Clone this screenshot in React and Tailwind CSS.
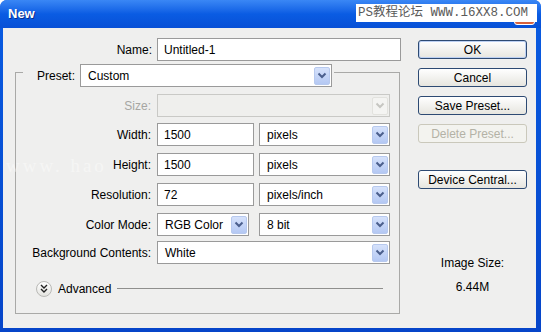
import React from "react";

const font = { fontFamily: "'Liberation Sans', Arial, sans-serif" };

// little blue drop button used on every select
const Arrow = ({ disabled }) => (
  <div
    className={
      "w-[16px] h-[18px] mr-[1px] flex items-center justify-center rounded-[2px] " +
      (disabled
        ? "bg-[#f4f4f2] border border-[#e2e2de]"
        : "bg-gradient-to-b from-[#d6e2fb] to-[#b4c8f3] border border-[#b7c9ee]")
    }
  >
    <svg width="10" height="7" viewBox="0 0 10 7">
      <path
        d="M1.5 1.5 L5 5 L8.5 1.5"
        fill="none"
        stroke={disabled ? "#c6c6c2" : "#4b5f8d"}
        strokeWidth="2"
      />
    </svg>
  </div>
);

const Select = ({ value, width, disabled }) => (
  <div
    className={
      "h-[23px] flex items-center justify-between border " +
      (disabled ? "bg-[#efefed] border-[#c9c9c6]" : "bg-white border-[#9a9a9a]")
    }
    style={{ width }}
  >
    <span className="pl-[7px] text-[12px] text-black">{value}</span>
    <Arrow disabled={disabled} />
  </div>
);

const Input = ({ value, width }) => (
  <div
    className="h-[23px] flex items-center bg-white border border-[#9a9a9a] pl-[6px] text-[12px] text-black"
    style={{ width }}
  >
    {value}
  </div>
);

const Row = ({ label, className = "", muted, children }) => (
  <div className={"flex items-center " + className}>
    <div
      className={
        "w-[136px] text-right text-[12px] pr-[1px] " +
        (muted ? "text-[#a6a6a2]" : "text-black")
      }
    >
      {label}
    </div>
    <div className="ml-[5px] flex items-center gap-[5px]">{children}</div>
  </div>
);

const Btn = ({ children, className = "", disabled, primary }) => (
  <div
    className={
      "w-[109px] h-[19px] flex items-center justify-center rounded-[3px] border text-[12px] " +
      (disabled
        ? "border-[#cac8bb] bg-[#f3f3ef] text-[#b4b2a6] "
        : "border-[#2d4a73] bg-gradient-to-b from-white to-[#e6e5df] text-black ") +
      (primary ? "shadow-[inset_0_0_0_1px_#bcd0f2] " : "") +
      className
    }
  >
    {children}
  </div>
);

export default function App() {
  return (
    <div
      className="relative w-[541px] h-[332px] flex flex-col bg-gradient-to-b from-[#0a5ce2] to-[#0645c9] rounded-t-[7px] overflow-hidden"
      style={font}
    >
      {/* title bar */}
      <div className="h-[28px] flex items-center justify-between pl-[8px] pr-[6px] bg-gradient-to-b from-[#3a87f5] via-[#0a5ce3] to-[#0850d6]">
        <span className="text-white font-bold text-[13px] [text-shadow:1px_1px_0_#0a2f8a]">
          New
        </span>
        <div className="w-[21px] h-[21px] rounded-[3px] bg-[#d8613c] border border-white" />
      </div>

      {/* body */}
      <div className="flex-1 ml-[3px] mr-[5px] mb-[4px] bg-[#efefee] flex">
        {/* form side */}
        <div className="w-[410px] flex flex-col">
          <div className="mt-[10px] flex items-center">
            <div className="w-[149px] text-right text-[12px] text-black">Name:</div>
            <div className="ml-[5px]">
              <Input value="Untitled-1" width={244} />
            </div>
          </div>

          {/* group box */}
          <div className="mt-[11px] ml-[12px] w-[385px] border border-[#a9a9a7] pb-[16px]">
            <div className="-mt-[9px] ml-[7px] w-fit flex items-center bg-[#efefee] pl-[14px] pr-[2px]">
              <span className="text-[12px] text-black">Preset:</span>
              <div className="ml-[5px]">
                <Select value="Custom" width={252} />
              </div>
            </div>

            <Row label="Size:" muted className="mt-[7px]">
              <Select value="" width={233} disabled />
            </Row>
            <Row label="Width:" className="mt-[6px]">
              <Input value="1500" width={97} />
              <Select value="pixels" width={131} />
            </Row>
            <Row label="Height:" className="mt-[7px]">
              <Input value="1500" width={97} />
              <Select value="pixels" width={131} />
            </Row>
            <Row label="Resolution:" className="mt-[7px]">
              <Input value="72" width={97} />
              <Select value="pixels/inch" width={131} />
            </Row>
            <Row label="Color Mode:" className="mt-[7px]">
              <Select value="RGB Color" width={92} />
              <div className="ml-[5px]">
                <Select value="8 bit" width={131} />
              </div>
            </Row>
            <Row label="Background Contents:" className="mt-[5px]">
              <Select value="White" width={233} />
            </Row>

            <div className="mt-[16px] ml-[20px] h-[17px] flex items-center">
              <div className="w-[16px] h-[16px] rounded-full border border-[#b9b9b6] bg-gradient-to-b from-white to-[#e4e4e0] flex items-center justify-center">
                <svg width="8" height="9" viewBox="0 0 8 9">
                  <path d="M1 1 L4 4 L7 1 M1 5 L4 8 L7 5" fill="none" stroke="#222" strokeWidth="1.4" />
                </svg>
              </div>
              <span className="ml-[6px] text-[12px] text-black">Advanced</span>
              <div className="ml-[6px] w-[266px] h-px bg-[#8f8f8d]" />
            </div>
          </div>
        </div>

        {/* buttons side */}
        <div className="ml-[5px] w-[109px] flex flex-col items-center">
          <Btn primary className="mt-[12px]">OK</Btn>
          <Btn className="mt-[9px]">Cancel</Btn>
          <Btn className="mt-[9px]">Save Preset...</Btn>
          <Btn disabled className="mt-[9px]">Delete Preset...</Btn>
          <Btn className="mt-[27px]">Device Central...</Btn>
          <div className="mt-[65px] text-[12px] text-black">Image Size:</div>
          <div className="mt-[6px] text-[12px] text-black">6.44M</div>
        </div>
      </div>

      {/* site watermarks laid over the screenshot */}
      <div
        className="absolute left-[356px] top-[4px] w-[181px] h-[18px] bg-white flex items-center pl-[2px] text-[12.5px] text-[#5a5a5a] leading-none"
        style={{ fontFamily: "'Liberation Mono', 'Noto Sans CJK SC', monospace" }}
      >
        PS教程论坛 WWW.16XX8.COM
      </div>
      <div
        className="absolute left-[6px] top-[152px] text-[19px] text-white/40 tracking-[3px] pointer-events-none"
        style={{ fontFamily: "'Liberation Serif', serif" }}
      >
        www. hao
      </div>
    </div>
  );
}
